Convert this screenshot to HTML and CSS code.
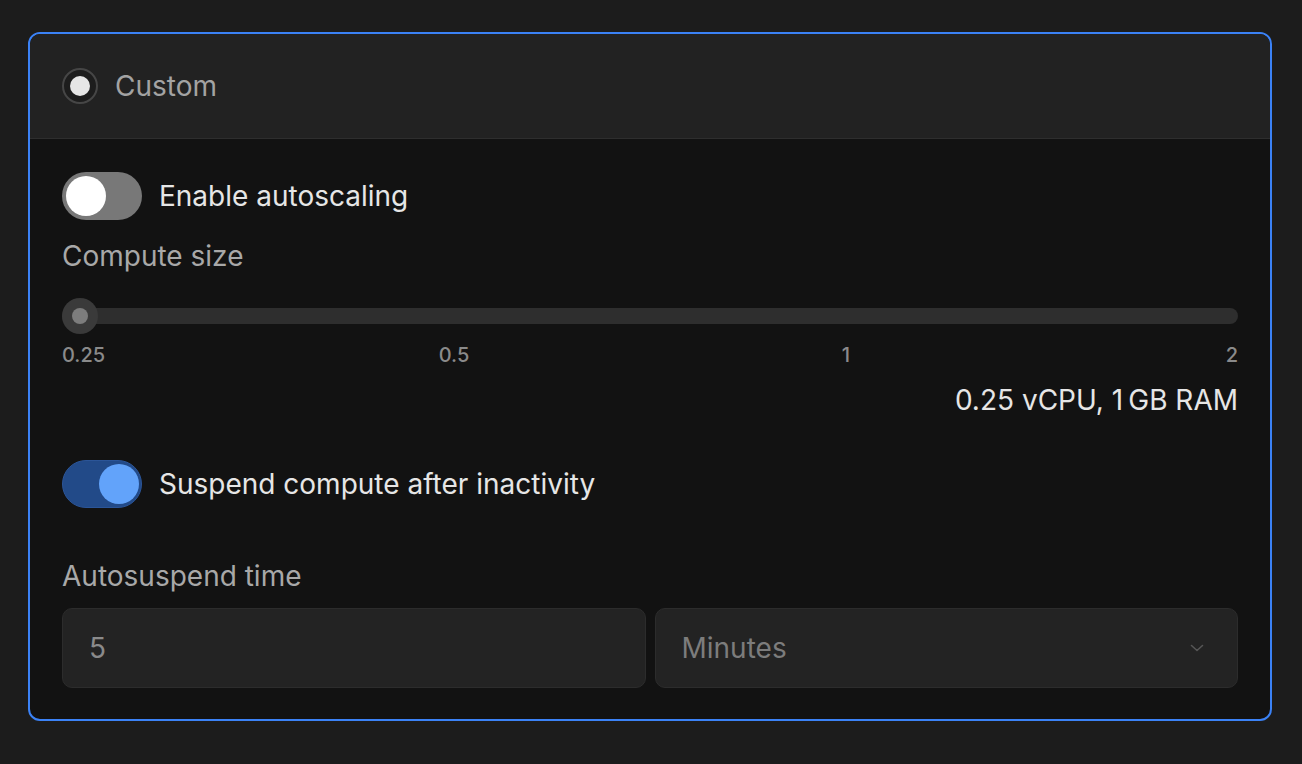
FILE: index.html
```html
<!DOCTYPE html>
<html lang="en">
<head>
<meta charset="utf-8">
<title>Custom compute</title>
<link rel="stylesheet" href="styles.css">
</head>
<body>
<div class="page">
  <section class="card">
    <header class="card-head">
      <span class="radio"><span class="radio-dot"></span></span>
      <span class="radio-label">Custom</span>
    </header>
    <div class="card-body">
      <div class="toggle-row">
        <span class="toggle off"><span class="knob"></span></span>
        <span class="toggle-label">Enable autoscaling</span>
      </div>
      <div class="field-label label-compute">Compute size</div>
      <div class="slider">
        <div class="track"></div>
        <span class="thumb"><span class="thumb-dot"></span></span>
      </div>
      <div class="ticks">
        <span class="tick tick-first">0.25</span>
        <span class="tick tick-mid" style="left:33.333%">0.5</span>
        <span class="tick tick-mid" style="left:66.667%">1</span>
        <span class="tick tick-last">2</span>
      </div>
      <div class="value">0.25 vCPU, 1&#8201;GB RAM</div>
      <div class="toggle-row row-suspend">
        <span class="toggle on"><span class="knob"></span></span>
        <span class="toggle-label">Suspend compute after inactivity</span>
      </div>
      <div class="field-label label-auto">Autosuspend time</div>
      <div class="inputs">
        <div class="box input-box">5</div>
        <div class="box select-box">
          <span>Minutes</span>
          <svg class="chevron" width="14" height="10" viewBox="0 0 14 10" aria-hidden="true">
            <path d="M1.5 2.5 L7 7.5 L12.5 2.5" fill="none" stroke="#555" stroke-width="1.6" stroke-linecap="round" stroke-linejoin="round"/>
          </svg>
        </div>
      </div>
    </div>
  </section>
</div>
</body>
</html>
```

FILE: styles.css
```css
* { box-sizing: border-box; }
html, body {
  margin: 0;
  padding: 0;
  background: #1c1c1c;
  font-family: Inter, "Noto Sans", "Liberation Sans", sans-serif;
}
.page {
  padding: 32px 30px 0 28px;
}
.card {
  width: 1244px;
  border: 2px solid #3b82f6;
  border-radius: 12px;
  overflow: hidden;
  background: #121212;
}
.card-head {
  height: 105px;
  background: #222222;
  border-bottom: 1px solid #2e2e2e;
  display: flex;
  align-items: center;
  padding: 0 32px;
  gap: 17px;
}
.radio {
  width: 36px;
  height: 36px;
  border-radius: 50%;
  border: 2px solid #464646;
  display: flex;
  align-items: center;
  justify-content: center;
  background: #1d1d1d;
}
.radio-dot {
  width: 20px;
  height: 20px;
  border-radius: 50%;
  background: #e6e6e6;
}
.radio-label {
  font-size: 28px;
  color: #a3a3a3;
  line-height: 36px;
}
.card-body {
  padding: 33px 32px 31px;
  display: flex;
  flex-direction: column;
}
.toggle-row {
  display: flex;
  align-items: center;
  gap: 17px;
  height: 48px;
}
.toggle {
  width: 80px;
  height: 48px;
  border-radius: 24px;
  padding: 4px;
  display: flex;
  align-items: center;
}
.toggle.off {
  background: #787878;
  justify-content: flex-start;
}
.toggle.on {
  background: #224a88;
  border: 1.5px solid #2b5598;
  justify-content: flex-end;
  padding: 2.5px;
}
.knob {
  width: 40px;
  height: 40px;
  border-radius: 50%;
  background: #ffffff;
}
.toggle.on .knob {
  background: #62a3fa;
}
.toggle-label {
  font-size: 28px;
  color: #e6e6e6;
  line-height: 36px;
}
.field-label {
  font-size: 28px;
  color: #a8a8a8;
  line-height: 40px;
  height: 40px;
}
.label-compute { margin-top: 16px; }
.label-auto { margin-top: 48px; }
.slider {
  margin-top: 22px;
  height: 36px;
  position: relative;
  display: flex;
  align-items: center;
}
.track {
  width: 100%;
  height: 16px;
  border-radius: 8px;
  background: #2e2e2e;
}
.thumb {
  position: absolute;
  left: 0;
  top: 0;
  width: 36px;
  height: 36px;
  border-radius: 50%;
  background: #3a3a3a;
  display: flex;
  align-items: center;
  justify-content: center;
}
.thumb-dot {
  width: 16px;
  height: 16px;
  border-radius: 50%;
  background: #7d7d7d;
}
.ticks {
  margin-top: 9px;
  height: 24px;
  position: relative;
  font-size: 20px;
  line-height: 24px;
  color: #8a8a8a;
  font-weight: 500;
}
.tick { position: absolute; top: 0; }
.tick-first { left: 0; }
.tick-mid { transform: translateX(-50%); }
.tick-last { right: 0; }
.value {
  margin-top: 15px;
  height: 36px;
  line-height: 36px;
  font-size: 28px;
  color: #e6e6e6;
  text-align: right;
}
.row-suspend { margin-top: 42px; }
.inputs {
  margin-top: 12px;
  display: grid;
  grid-template-columns: 1fr 1fr;
  gap: 9px;
}
.box {
  height: 80px;
  border-radius: 10px;
  background: #232323;
  border: 1px solid #2c2c2c;
  display: flex;
  align-items: center;
  padding: 0 26px;
  font-size: 28px;
  color: #8a8a8a;
}
.select-box {
  justify-content: space-between;
  color: #7c7c7c;
  padding-right: 33px;
}
.chevron { display: block; }
```
